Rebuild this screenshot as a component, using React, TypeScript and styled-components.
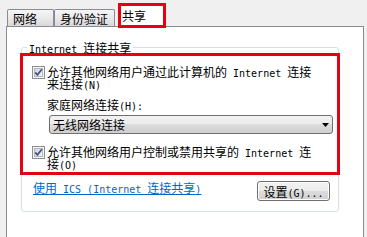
import React from 'react';
import styled, { createGlobalStyle } from 'styled-components';

const GlobalStyle = createGlobalStyle`
  html, body {
    margin: 0;
    padding: 0;
    background: #f0f0f0;
  }
  body {
    font-family: "Noto Sans CJK SC", "Liberation Sans", sans-serif;
    font-size: 12px;
    color: #000;
  }
`;

const Window = styled.div`
  height: 237px;
  overflow: hidden;
  padding: 0 3px 0 6px;
  box-sizing: border-box;
`;

const TabStrip = styled.div`
  display: flex;
  align-items: flex-end;
  height: 26px;
  padding-left: 1px;
`;

const Tab = styled.div<{ $active?: boolean }>`
  box-sizing: border-box;
  line-height: 13px;
  white-space: nowrap;
  border-top-left-radius: 2px;
  border-top-right-radius: 2px;

  ${({ $active }) =>
    $active
      ? `
    position: relative;
    z-index: 1;
    width: 48px;
    height: 25px;
    margin: 0 0 -2px 3px;
    padding: 3px 0 0 1px;
    background: #fff;
    border: 3px solid #e50012;
    border-radius: 0;
  `
      : `
    min-width: 47px;
    height: 17px;
    padding: 2px 6px 0 5px;
    background: linear-gradient(#f5f5f5, #e8e8e8 55%, #d8d8d8);
    border: 1px solid #898c95;
    border-bottom: none;
  `}
`;

const Panel = styled.div`
  box-sizing: border-box;
  height: 230px;
  background: #fff;
  border: 1px solid #898c95;
  padding-top: 14px;
`;

const Group = styled.fieldset`
  box-sizing: border-box;
  width: 318px;
  margin: 0 0 0 14px;
  padding: 0 0 10px;
  min-width: 0;
  border: 1px solid #d5dfe5;
  border-radius: 3px;
`;

const Legend = styled.legend`
  margin-left: 5px;
  padding: 0 2px;
  line-height: 13px;
`;

const Lat = styled.span`
  font-family: "DejaVu Sans Mono", "Liberation Mono", monospace;
  font-size: 10px;
  line-height: 0;
`;

const Highlight = styled.div`
  margin: -1px -2px 0;
  border: 3px solid #e50012;
  padding: 10px 0 2px 9px;
`;

const CheckRow = styled.div<{ $gap?: number }>`
  display: flex;
  align-items: flex-start;
  gap: 2px;
  margin-top: ${({ $gap }) => $gap ?? 0}px;
`;

const CheckText = styled.div`
  width: 270px;
  line-height: 12px;
`;

const FieldLabel = styled.div`
  margin-top: 8px;
  padding-left: 15px;
  line-height: 13px;
`;

const ComboBox = styled.div`
  box-sizing: border-box;
  display: flex;
  align-items: center;
  justify-content: space-between;
  width: 284px;
  height: 19px;
  margin: 4px 0 0 17px;
  padding: 0 3px 0 3px;
  border: 1px solid #707070;
  border-radius: 3px;
  background: linear-gradient(#f2f2f2, #ebebeb 50%, #dddddd 50%, #cfcfcf);
  line-height: 13px;
`;

const BottomRow = styled.div`
  display: flex;
  justify-content: space-between;
  align-items: flex-start;
  margin-top: 6px;
  padding: 0 8px 0 11px;
`;

const Link = styled.a`
  color: #0066cc;
  text-decoration: underline;
  line-height: 13px;
  cursor: pointer;
`;

const Button = styled.button`
  box-sizing: border-box;
  width: 73px;
  height: 20px;
  padding: 0;
  font: inherit;
  line-height: 13px;
  color: #000;
  border: 1px solid #707070;
  border-radius: 3px;
  background: linear-gradient(#f2f2f2, #ebebeb 50%, #dddddd 50%, #cfcfcf);
  box-shadow: inset 0 0 0 1px #fcfcfc;
`;

const CheckBox = () => (
  <svg width="13" height="13" viewBox="0 0 13 13" style={{ flex: 'none' }}>
    <defs>
      <linearGradient id="cbg" x1="0" y1="0" x2="1" y2="1">
        <stop offset="0" stopColor="#cfd3da" />
        <stop offset="1" stopColor="#f7f7f7" />
      </linearGradient>
    </defs>
    <rect x="0.5" y="0.5" width="12" height="12" fill="#f4f4f4" stroke="#8e8f8f" />
    <rect x="2.5" y="2.5" width="8" height="8" fill="url(#cbg)" stroke="#b4b9c1" />
    <path d="M3.2 6.4 L5.4 8.9 L9.9 3.2" fill="none" stroke="#3f5584" strokeWidth="1.7" />
  </svg>
);

const Arrow = () => (
  <svg width="7" height="4" viewBox="0 0 7 4">
    <path d="M0 0 H7 L3.5 4 Z" fill="#000" />
  </svg>
);

export default function App() {
  return (
    <>
      <GlobalStyle />
      <Window>
        <TabStrip>
          <Tab>网络</Tab>
          <Tab>身份验证</Tab>
          <Tab $active>共享</Tab>
        </TabStrip>
        <Panel>
          <Group>
            <Legend>
              <Lat>Internet </Lat>连接共享
            </Legend>
            <Highlight>
              <CheckRow>
                <CheckBox />
                <CheckText>
                  允许其他网络用户通过此计算机的<Lat> Internet </Lat>连接来连接<Lat>(N)</Lat>
                </CheckText>
              </CheckRow>
              <FieldLabel>
                家庭网络连接<Lat>(H):</Lat>
              </FieldLabel>
              <ComboBox>
                <span>无线网络连接</span>
                <Arrow />
              </ComboBox>
              <CheckRow $gap={12}>
                <CheckBox />
                <CheckText>
                  允许其他网络用户控制或禁用共享的<Lat> Internet </Lat>连接<Lat>(O)</Lat>
                </CheckText>
              </CheckRow>
            </Highlight>
            <BottomRow>
              <Link>
                使用<Lat> ICS (Internet </Lat>连接共享<Lat>)</Lat>
              </Link>
              <Button>
                设置<Lat>(G)...</Lat>
              </Button>
            </BottomRow>
          </Group>
        </Panel>
      </Window>
    </>
  );
}
